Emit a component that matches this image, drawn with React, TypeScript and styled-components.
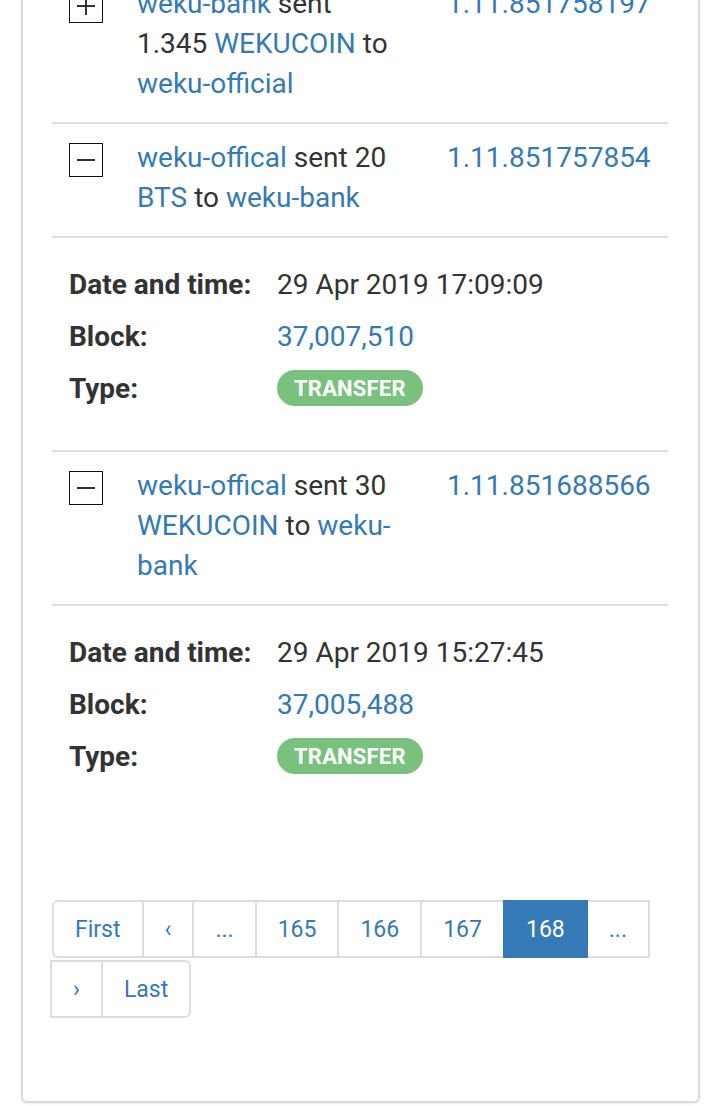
import React from 'react';
import styled, { createGlobalStyle } from 'styled-components';

const GlobalStyle = createGlobalStyle`
  html, body { margin: 0; padding: 0; background: #fff; }
  body { font-family: Roboto, "Noto Sans", "Liberation Sans", sans-serif; color: #333; }
  #root { overflow: hidden; }
`;

const Page = styled.div`
  padding: 0 20px 3px 21px;
  overflow: hidden;
`;

const Card = styled.div`
  margin-top: -58px;
  border: 2px solid #dcdcdc;
  border-radius: 6px;
  box-shadow: 0 1px 2px rgba(0, 0, 0, 0.08);
  padding: 24px 30px 83px 29px;
  background: #fff;
`;

const OpRow = styled.div`
  display: grid;
  grid-template-columns: 34px 266px 1fr;
  column-gap: 34px;
  padding: 14px 0 18px 17px;
  border-top: 2px solid #e0e0e0;
  font-size: 28px;
  line-height: 40px;
`;

const Toggle = styled.span<{ $open: boolean }>`
  position: relative;
  width: 34px;
  height: 34px;
  margin-top: 5px;
  box-sizing: border-box;
  border: 1.5px solid #111;
  &::before {
    content: '';
    position: absolute;
    left: 7px;
    right: 7px;
    top: 50%;
    height: 2px;
    margin-top: -1px;
    background: #333;
  }
  &::after {
    content: '';
    display: ${(p) => (p.$open ? 'none' : 'block')};
    position: absolute;
    top: 7px;
    bottom: 7px;
    left: 50%;
    width: 2px;
    margin-left: -1px;
    background: #333;
  }
`;

const OpText = styled.div`
  color: #333;
`;

const Link = styled.a`
  color: #337ab7;
  text-decoration: none;
`;

const OpId = styled.div`
  margin-left: 10px;
  color: #337ab7;
  white-space: nowrap;
`;

const Details = styled.div`
  display: grid;
  grid-template-columns: 208px 1fr;
  grid-auto-rows: 52px;
  align-items: center;
  padding: 20px 0 36px 17px;
  border-top: 2px solid #e0e0e0;
  font-size: 28px;
`;

const Label = styled.div`
  font-weight: 700;
  color: #333;
`;

const Value = styled.div`
  color: #333;
`;

const Badge = styled.span`
  display: inline-flex;
  align-items: center;
  justify-content: center;
  height: 36px;
  padding: 0 17px;
  border-radius: 18px;
  background: #78c27d;
  color: #fff;
  font-weight: 700;
  font-size: 22px;
  letter-spacing: 0.2px;
`;

const Pagination = styled.ul`
  list-style: none;
  margin: 82px 0 0 0;
  padding: 0;
  display: flex;
  flex-wrap: wrap;
  row-gap: 2px;
`;

const PageItem = styled.li<{ $active?: boolean }>`
  display: flex;
  align-items: center;
  justify-content: center;
  box-sizing: border-box;
  height: 58px;
  padding: 0 21px;
  margin-left: -2px;
  border: 2px solid ${(p) => (p.$active ? '#337ab7' : '#dddddd')};
  background: ${(p) => (p.$active ? '#337ab7' : '#fff')};
  color: ${(p) => (p.$active ? '#fff' : '#337ab7')};
  font-size: 23px;
  position: relative;
  z-index: ${(p) => (p.$active ? 1 : 0)};
  &:first-child {
    margin-left: 0;
    border-radius: 6px 0 0 6px;
  }
  &:last-child {
    border-radius: 0 6px 6px 0;
  }
`;

type Op = {
  open: boolean;
  id: string;
  content: React.ReactNode;
  details?: { date: string; block: string };
};

const ops: Op[] = [
  {
    open: false,
    id: '1.11.851758197',
    content: (
      <>
        <Link>weku-bank</Link> sent 1.345 <Link>WEKUCOIN</Link> to <Link>weku-official</Link>
      </>
    ),
  },
  {
    open: true,
    id: '1.11.851757854',
    content: (
      <>
        <Link>weku-offical</Link> sent 20 <Link>BTS</Link> to <Link>weku-bank</Link>
      </>
    ),
    details: { date: '29 Apr 2019 17:09:09', block: '37,007,510' },
  },
  {
    open: true,
    id: '1.11.851688566',
    content: (
      <>
        <Link>weku-offical</Link> sent 30 <Link>WEKUCOIN</Link> to <Link>weku-bank</Link>
      </>
    ),
    details: { date: '29 Apr 2019 15:27:45', block: '37,005,488' },
  },
];

const pages = ['First', '‹', '...', '165', '166', '167', '168', '...', '›', 'Last'];

export default function App() {
  return (
    <>
      <GlobalStyle />
      <Page>
        <Card>
          {ops.map((op, i) => (
            <React.Fragment key={i}>
              <OpRow>
                <Toggle $open={op.open} />
                <OpText>{op.content}</OpText>
                <OpId>{op.id}</OpId>
              </OpRow>
              {op.details && (
                <Details>
                  <Label>Date and time:</Label>
                  <Value>{op.details.date}</Value>
                  <Label>Block:</Label>
                  <Value>
                    <Link>{op.details.block}</Link>
                  </Value>
                  <Label>Type:</Label>
                  <Value>
                    <Badge>TRANSFER</Badge>
                  </Value>
                </Details>
              )}
            </React.Fragment>
          ))}
          <Pagination>
            {pages.map((p, i) => (
              <PageItem key={i} $active={p === '168'}>
                {p}
              </PageItem>
            ))}
          </Pagination>
        </Card>
      </Page>
    </>
  );
}
